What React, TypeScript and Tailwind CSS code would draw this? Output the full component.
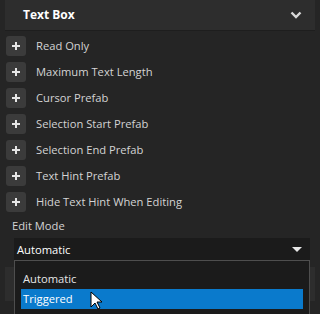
import React from "react";

const rows = [
  "Read Only",
  "Maximum Text Length",
  "Cursor Prefab",
  "Selection Start Prefab",
  "Selection End Prefab",
  "Text Hint Prefab",
  "Hide Text Hint When Editing",
];

function PlusButton() {
  return (
    <div className="w-5 h-5 rounded-[3px] bg-[#3b3b3b] flex items-center justify-center shrink-0">
      <svg width="10" height="10" viewBox="0 0 10 10">
        <path d="M5 1v8M1 5h8" stroke="#e6e6e6" strokeWidth="2" />
      </svg>
    </div>
  );
}

export default function App() {
  return (
    <div
      className="relative w-[320px] h-[314px] overflow-hidden bg-[#252525] text-[11.2px] text-[#d4d4d4]"
      style={{ fontFamily: '"Open Sans", "Noto Sans", sans-serif' }}
    >
      {/* header */}
      <div className="mx-[5px] h-[31px] bg-[#2d2d2d] border-b border-[#1e1e1e] flex items-center justify-between pl-[18px] pr-[13px]">
        <span className="text-white font-bold text-[12px]">Text Box</span>
        <svg width="12" height="8" viewBox="0 0 12 8">
          <path d="M1.5 1.5L6 6l4.5-4.5" stroke="#d8d8d8" strokeWidth="2.4" fill="none" />
        </svg>
      </div>

      {/* property rows */}
      <div className="flex flex-col gap-[6px] mt-[5px] px-[6px]">
        {rows.map((r) => (
          <div key={r} className="flex items-center gap-[10px] h-5">
            <PlusButton />
            <span className="leading-none">{r}</span>
          </div>
        ))}
      </div>

      {/* edit mode */}
      <div className="pl-[12px] mt-[6px] leading-[16px]">Edit Mode</div>
      <div className="ml-[14px] mr-[10px] mt-[4px] h-[24px] bg-[#1b1b1b] flex items-center justify-between pl-[3px] pr-[8px] text-white">
        <span>Automatic</span>
        <svg width="10" height="6" viewBox="0 0 10 6">
          <path d="M0 0h10L5 5z" fill="#e8e8e8" />
        </svg>
      </div>

      {/* content behind popup */}
      <div className="mx-[5px] mt-[5px] h-[34px] bg-[#2d2d2d]" />

      {/* popup list */}
      <div className="absolute left-[14px] top-[260px] w-[296px] h-[60px] bg-[#1b1b1b] border border-[#4e4e4e] pt-[8px] px-[6px]">
        <div className="h-[20px] flex items-center pl-[2px] text-[#e6e6e6]">Automatic</div>
        <div className="h-[20px] flex items-center pl-[2px] bg-[#0a7acc] text-white">Triggered</div>
      </div>

      {/* mouse cursor */}
      <svg
        className="absolute left-[90px] top-[291px]"
        width="14"
        height="20"
        viewBox="0 0 14 20"
      >
        <path d="M1 1v15l4-4 3 6 2-1-3-6h5z" fill="#fff" stroke="#000" strokeWidth="1" />
      </svg>
    </div>
  );
}
